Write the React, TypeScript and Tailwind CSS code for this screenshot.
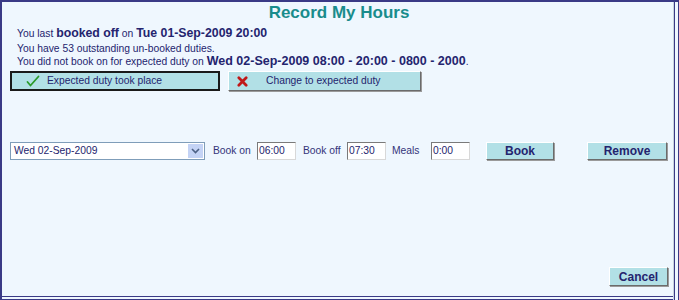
import React from "react";

const font = { fontFamily: '"Liberation Sans", Arial, sans-serif' };

function Check() {
  return (
    <svg width="14" height="12" viewBox="0 0 14 12">
      <path d="M1.5 7 L4.5 10.5 L12.5 1.5" stroke="#2a9a2a" strokeWidth="1.8" fill="none" strokeLinecap="round" />
    </svg>
  );
}
function Cross() {
  return (
    <svg width="11" height="11" viewBox="0 0 12 12">
      <path d="M2 2 L10 10 M10 2 L2 10" stroke="#c01818" strokeWidth="3" fill="none" strokeLinecap="round" />
    </svg>
  );
}

const raised =
  "bg-[#b2e0e6] border border-t-white border-l-white border-r-[#6b6b6b] border-b-[#6b6b6b] shadow-[1px_1px_0_#9a9a9a]";
const input =
  "shrink-0 w-[39px] h-[18px] bg-white border border-t-[#7a7a7a] border-l-[#7a7a7a] border-r-[#d8d8d8] border-b-[#d8d8d8] flex items-center pl-[1px] text-[#24246e]";

export default function App() {
  return (
    <div style={font} className="w-[679px] h-[300px] bg-white">
      <div className="w-[679px] h-[300px] border-t-2 border-l-2 border-[#3a3a86] flex">
        <div className="flex-1 flex flex-col border-r border-[#c9d3de] bg-[#eff7fe]">
          <div className="flex-1 flex flex-col pl-[8px] pr-[5px]">
            <div className="text-center text-[17px] font-bold text-[#198c8c] leading-[20px] pt-[1px]">
              Record My Hours
            </div>
            <div className="pl-[7px] text-[#24246e] mt-[3px] whitespace-nowrap">
              <div className="text-[10.3px] leading-[15px]">
                You last <b className="text-[12.3px]">booked off</b> on{" "}
                <b className="text-[12.3px]">Tue 01-Sep-2009 20:00</b>
              </div>
              <div className="text-[10.3px] leading-[13px] mt-[1px]">You have 53 outstanding un-booked duties.</div>
              <div className="text-[10.3px] leading-[13px]">
                You did not book on for expected duty on{" "}
                <b className="text-[12.5px]">Wed 02-Sep-2009 08:00 - 20:00 - 0800 - 2000</b>.
              </div>
            </div>
            <div className="flex gap-[8px] mt-[3px] whitespace-nowrap">
              <div className="w-[210px] h-[20px] bg-[#b2e0e6] border-2 border-[#1a1a1a] flex items-center text-[10.3px] text-[#24246e]">
                <span className="ml-[14px] mr-[7px] flex items-center"><Check /></span>
                Expected duty took place
              </div>
              <div className={`w-[193px] h-[20px] flex items-center text-[10.3px] text-[#24246e] ${raised}`}>
                <span className="ml-[8px] mr-[18px] flex items-center"><Cross /></span>
                Change to expected duty
              </div>
            </div>
            <div className="flex items-center mt-[51px] text-[10.3px] text-[#34347a] whitespace-nowrap">
              <div className="shrink-0 w-[195px] h-[18px] bg-white border border-[#7f9db9] flex items-center justify-between">
                <span className="pl-[3px] text-[#24246e]">Wed 02-Sep-2009</span>
                <span className="w-[15px] h-[14px] mr-[1px] bg-[#c4d3f5] flex items-center justify-center">
                  <svg width="9" height="6" viewBox="0 0 9 6">
                    <path d="M1 1 L4.5 4.5 L8 1" stroke="#4d6185" strokeWidth="1.6" fill="none" />
                  </svg>
                </span>
              </div>
              <span className="shrink-0 w-[52px] pl-[8px]">Book on</span>
              <div className={input}>06:00</div>
              <span className="shrink-0 w-[51px] pl-[7px]">Book off</span>
              <div className={input}>07:30</div>
              <span className="shrink-0 w-[45px] pl-[6px]">Meals</span>
              <div className={input}>0:00</div>
              <div className={`shrink-0 ml-[16px] w-[68px] h-[18px] flex items-center justify-center font-bold text-[12px] text-[#24246e] ${raised}`}>Book</div>
              <div className={`shrink-0 ml-[33px] w-[80px] h-[18px] flex items-center justify-center font-bold text-[12px] text-[#24246e] ${raised}`}>Remove</div>
            </div>
            <div className="flex-1" />
            <div className="flex justify-end pb-[10px]">
              <div className={`w-[59px] h-[19px] flex items-center justify-center font-bold text-[12px] text-[#24246e] ${raised}`}>Cancel</div>
            </div>
          </div>
          <div className="h-[4px] border-t border-b border-[#3a3a86] bg-[#eff7fe]" />
        </div>
        <div className="w-[5px] border-l border-r border-[#3a3a86] bg-[#eff7fe]" />
      </div>
    </div>
  );
}
